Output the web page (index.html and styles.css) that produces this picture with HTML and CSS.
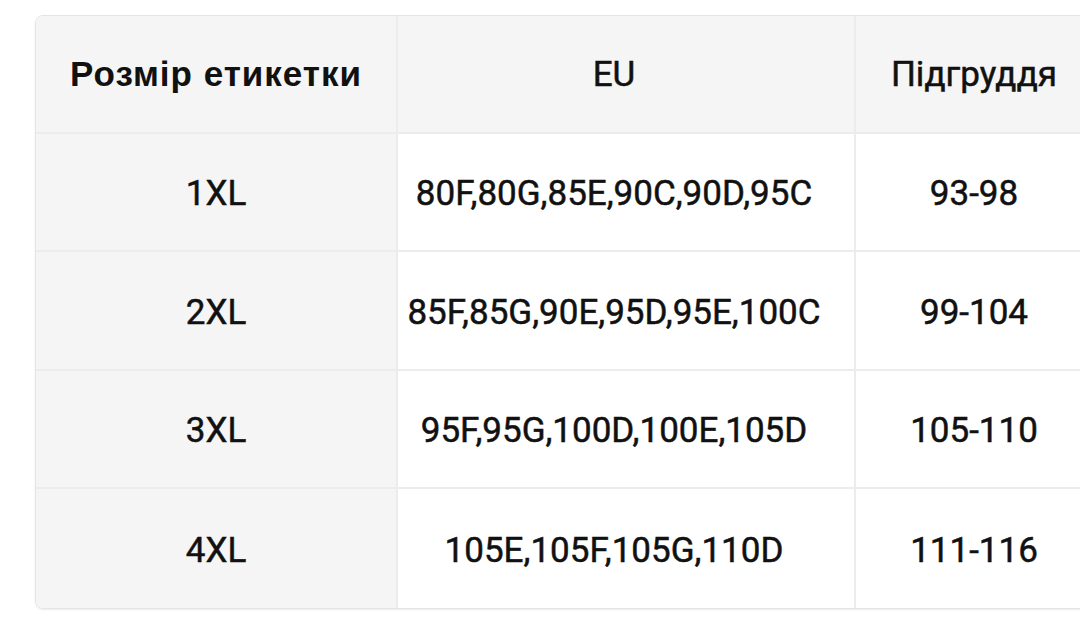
FILE: index.html
```html
<!DOCTYPE html>
<html lang="uk">
<head>
<meta charset="utf-8">
<link rel="stylesheet" href="styles.css">
</head>
<body>
<div class="wrap">
  <table class="sizes">
    <thead>
      <tr><th class="c1 alt">Розмір етикетки</th><th class="c2">EU</th><th class="c3">Підгруддя</th></tr>
    </thead>
    <tbody>
      <tr><td class="c1">1XL</td><td class="c2">80F,80G,85E,90C,90D,95C</td><td class="c3">93-98</td></tr>
      <tr class="tall"><td class="c1">2XL</td><td class="c2">85F,85G,90E,95D,95E,100C</td><td class="c3">99-104</td></tr>
      <tr><td class="c1">3XL</td><td class="c2">95F,95G,100D,100E,105D</td><td class="c3">105-110</td></tr>
      <tr class="tall"><td class="c1">4XL</td><td class="c2">105E,105F,105G,110D</td><td class="c3">111-116</td></tr>
    </tbody>
  </table>
</div>
</body>
</html>
```
FILE: styles.css
```css
html, body {
  margin: 0;
  padding: 0;
  background: #ffffff;
  overflow: hidden;
}
.wrap {
  width: 1080px;
  height: 619px;
  overflow: hidden;
  padding: 15px 0 0 35px;
  box-sizing: border-box;
}
.sizes {
  border-collapse: separate;
  border-spacing: 0;
  width: 1058px;
  table-layout: fixed;
  font-family: Roboto, "Liberation Sans", sans-serif;
  font-weight: 400;
  font-size: 35px;
  color: #111111;
  border: 1px solid #e4e4e4;
  border-radius: 8px;
  box-shadow: 0 1px 2px rgba(0,0,0,0.08);
  overflow: hidden;
}
.sizes th, .sizes td {
  height: 118px;
  padding: 0 0 0 0;
  text-align: center;
  vertical-align: middle;
  border-right: 2px solid #ececec;
  border-bottom: 2px solid #ececec;
  box-sizing: border-box;
  -webkit-text-stroke: 0.5px #111111;
}
.sizes td { padding-top: 3px; }
.sizes tr.tall td { height: 119px; }
.sizes tr:last-child td { border-bottom: none; }
.sizes th { background: #f5f5f5; font-weight: 400; }
.sizes th.alt {
  font-family: "Liberation Sans", Arial, sans-serif;
  font-weight: 700;
  font-size: 35px;
  letter-spacing: 1px;
  -webkit-text-stroke: 0;
}
.sizes td.c1 { background: #f5f5f5; }
.sizes td.c2, .sizes td.c3 { background: #ffffff; }
.sizes .c2 { padding-right: 24px; }
.c1 { width: 362px; }
.c2 { width: 458px; }
.c3 { width: 238px; }
```
